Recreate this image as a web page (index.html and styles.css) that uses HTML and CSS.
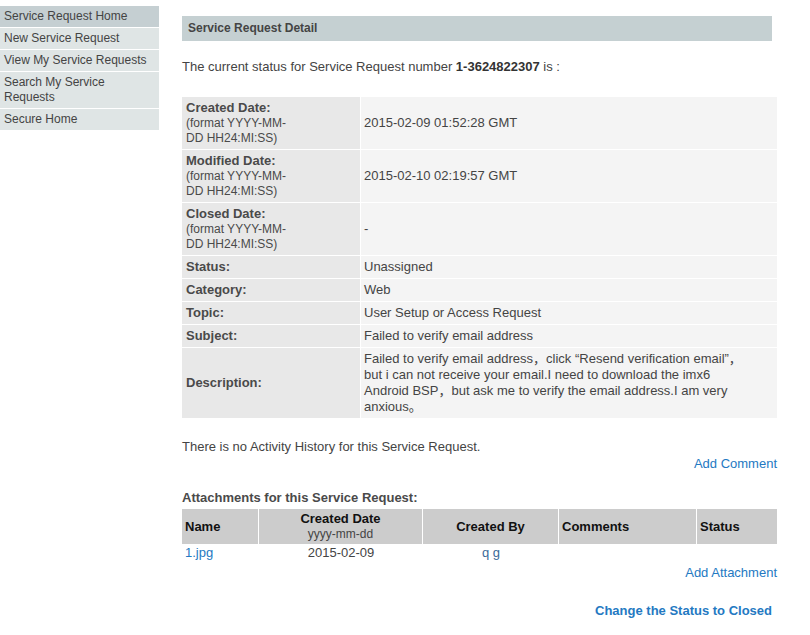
FILE: index.html
```html
<!DOCTYPE html>
<html lang="en">

<head>
    <meta charset="UTF-8">
    <meta name="viewport" content="width=device-width, initial-scale=1.0">
    <title>Service Request Detail</title>
    <link rel="stylesheet" href="styles.css">
</head>

<body>
    <div class="page">

        <!-- Left menu -->
        <ul class="side-menu">
            <li class="active"><a href="#">Service Request Home</a></li>
            <li><a href="#">New Service Request</a></li>
            <li><a href="#">View My Service Requests</a></li>
            <li><a href="#">Search My Service Requests</a></li>
            <li><a href="#">Secure Home</a></li>
        </ul>

        <div class="main">
            <div class="title-bar">Service Request Detail</div>

            <p class="status-line">The current status for Service Request number <b>1-3624822307</b> is :</p>

            <table class="detail">
                <tr>
                    <td class="label">Created Date:<div class="fmt">(format YYYY-MM-DD HH24:MI:SS)</div></td>
                    <td class="value">2015-02-09 01:52:28 GMT</td>
                </tr>
                <tr>
                    <td class="label">Modified Date:<div class="fmt">(format YYYY-MM-DD HH24:MI:SS)</div></td>
                    <td class="value">2015-02-10 02:19:57 GMT</td>
                </tr>
                <tr>
                    <td class="label">Closed Date:<div class="fmt">(format YYYY-MM-DD HH24:MI:SS)</div></td>
                    <td class="value">-</td>
                </tr>
                <tr>
                    <td class="label">Status:</td>
                    <td class="value">Unassigned</td>
                </tr>
                <tr>
                    <td class="label">Category:</td>
                    <td class="value">Web</td>
                </tr>
                <tr>
                    <td class="label">Topic:</td>
                    <td class="value">User Setup or Access Request</td>
                </tr>
                <tr>
                    <td class="label">Subject:</td>
                    <td class="value">Failed to verify email address</td>
                </tr>
                <tr>
                    <td class="label">Description:</td>
                    <td class="value">Failed to verify email address，click “Resend verification email”，<wbr>but i can not receive your email.I need to download the imx6 Android BSP，<wbr>but ask me to verify the email address.I am very anxious。</td>
                </tr>
            </table>

            <p class="no-history">There is no Activity History for this Service Request.</p>
            <div class="action"><a href="#">Add Comment</a></div>

            <h4 class="att-title">Attachments for this Service Request:</h4>
            <table class="attachments">
                <thead>
                    <tr>
                        <th class="c-name">Name</th>
                        <th class="c-date center">Created Date<div class="fmt">yyyy-mm-dd</div></th>
                        <th class="c-by center">Created By</th>
                        <th class="c-comments">Comments</th>
                        <th class="c-status">Status</th>
                    </tr>
                </thead>
                <tbody>
                    <tr>
                        <td><a href="#">1.jpg</a></td>
                        <td class="center">2015-02-09</td>
                        <td class="center by">q g</td>
                        <td></td>
                        <td></td>
                    </tr>
                </tbody>
            </table>
            <div class="action att-action"><a href="#">Add Attachment</a></div>

            <div class="close-link"><a href="#">Change the Status to Closed</a></div>
        </div>

    </div>
</body>

</html>
```

FILE: styles.css
```css
body {
    font-family: "Liberation Sans", Arial, "Noto Sans CJK SC", sans-serif;
    font-size: 13px;
    color: #444;
    background: #fff;
    margin: 0;
}

a {
    color: #2479c2;
    text-decoration: none;
}

.page {
    display: flex;
    align-items: flex-start;
}

/* left menu */
.side-menu {
    list-style: none;
    margin: 6px 0 0 0;
    padding: 0;
    width: 159px;
    flex-shrink: 0;
}

.side-menu li {
    background: #dfe5e5;
    border-bottom: 1px solid #fff;
    padding: 3px 4px;
    font-size: 12px;
    line-height: 15px;
}

.side-menu li.active {
    background: #c5cfd2;
}

.side-menu a {
    color: #444;
}

/* main column */
.main {
    width: 595px;
    margin-left: 23px;
    padding-top: 16px;
}

.title-bar {
    width: 590px;
    height: 25px;
    line-height: 25px;
    box-sizing: border-box;
    padding-left: 6px;
    background: #c5d0d2;
    font-size: 12px;
    font-weight: bold;
    color: #444;
}

.status-line {
    margin: 18px 0 0 0;
    line-height: 16px;
}

.status-line b {
    color: #333;
}

/* detail table */
.detail {
    width: 100%;
    margin-top: 22px;
    border-collapse: separate;
    border-spacing: 0;
}

.detail td {
    padding: 3px 4px;
    line-height: 16px;
    vertical-align: middle;
    border-bottom: 1px solid #fff;
}

.detail .label {
    width: 179px;
    box-sizing: border-box;
    background: #e8e8e8;
    border-right: 1px solid #fff;
    font-weight: bold;
    color: #4a4a4a;
}

.detail .value {
    background: #f4f4f4;
    padding-left: 3px;
    padding-right: 25px;
}

.fmt {
    font-size: 12px;
    font-weight: normal;
    line-height: 15px;
    width: 108px;
}

.no-history {
    margin: 20px 0 0 0;
    line-height: 16px;
}

.action {
    text-align: right;
    line-height: 16px;
    margin-top: 1px;
}

/* attachments */
.att-title {
    margin: 18px 0 0 0;
    font-size: 13px;
    line-height: 16px;
    color: #4a4a4a;
}

.attachments {
    width: 100%;
    margin-top: 3px;
    table-layout: fixed;
    border-collapse: separate;
    border-spacing: 0;
}

.attachments th {
    background: #ccc;
    color: #111;
    text-align: left;
    padding: 2px 3px;
    line-height: 16px;
    box-sizing: border-box;
    border-right: 1px solid #fff;
    border-bottom: 1px solid #fff;
    vertical-align: middle;
}

.attachments th .fmt {
    width: auto;
    color: #444;
}

.attachments th.c-status {
    border-right: none;
}

.c-name { width: 77px; }
.c-date { width: 164px; }
.c-by { width: 136px; }
.c-comments { width: 138px; }
.c-status { width: 80px; }

.attachments td {
    padding: 0 3px 1px;
    line-height: 16px;
}

.attachments .center {
    text-align: center;
}

.attachments .by {
    color: #3a6a9a;
}

.att-action {
    margin-top: 3px;
}

.close-link {
    text-align: right;
    margin-top: 22px;
    padding-right: 5px;
    line-height: 16px;
    font-weight: bold;
}
```
